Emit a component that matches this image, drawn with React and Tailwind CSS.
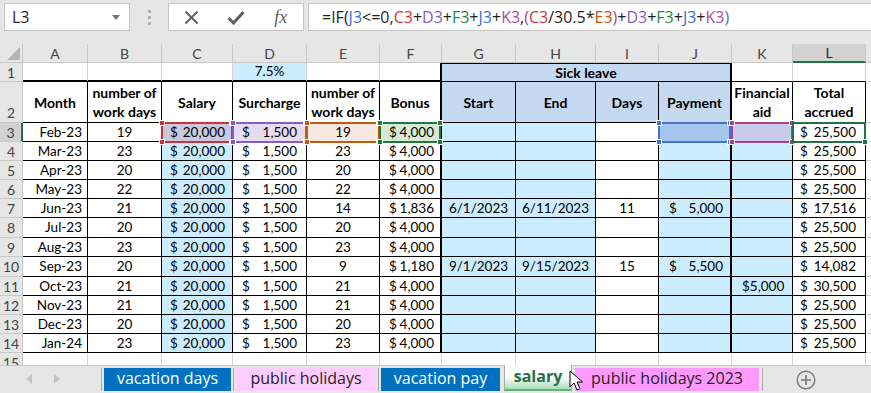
import React from "react";

const HEAD = "bg-[#e6e6e6]";
const GRID = "grid grid-cols-[23px_65px_74px_71px_74px_73px_62px_74px_80px_63px_73px_61px_73px_1fr]";
const CELLS = "grid grid-cols-[65px_74px_71px_74px_73px_62px_74px_80px_63px_73px_61px_73px]";

const rows = [
  { n: 3, m: "Feb-23", b: 19, e: 19, f: "4,000", l: "25,500" },
  { n: 4, m: "Mar-23", b: 23, e: 23, f: "4,000", l: "25,500" },
  { n: 5, m: "Apr-23", b: 20, e: 20, f: "4,000", l: "25,500" },
  { n: 6, m: "May-23", b: 22, e: 22, f: "4,000", l: "25,500" },
  { n: 7, m: "Jun-23", b: 21, e: 14, f: "1,836", g: "6/1/2023", h: "6/11/2023", i: 11, j: "5,000", l: "17,516" },
  { n: 8, m: "Jul-23", b: 20, e: 20, f: "4,000", l: "25,500", tall: true },
  { n: 9, m: "Aug-23", b: 23, e: 23, f: "4,000", l: "25,500" },
  { n: 10, m: "Sep-23", b: 20, e: 9, f: "1,180", g: "9/1/2023", h: "9/15/2023", i: 15, j: "5,500", l: "14,082", tall: true },
  { n: 11, m: "Oct-23", b: 21, e: 21, f: "4,000", k: "5,000", l: "30,500" },
  { n: 12, m: "Nov-23", b: 21, e: 21, f: "4,000", l: "25,500" },
  { n: 13, m: "Dec-23", b: 20, e: 20, f: "4,000", l: "25,500" },
  { n: 14, m: "Jan-24", b: 23, e: 23, f: "4,000", l: "25,500" },
];

const formula = [
  ["=IF(", "#1f1f1f"],
  ["J3", "#3b6fd0"],
  ["<=0,", "#1f1f1f"],
  ["C3", "#d0373c"],
  ["+", "#1f1f1f"],
  ["D3", "#8a5cc2"],
  ["+", "#1f1f1f"],
  ["F3", "#1d8a3c"],
  ["+", "#1f1f1f"],
  ["J3", "#3b6fd0"],
  ["+", "#1f1f1f"],
  ["K3", "#b34b9f"],
  [",", "#1f1f1f"],
  ["(", "#a0479e"],
  ["C3", "#d0373c"],
  ["/30.5*", "#1f1f1f"],
  ["E3", "#c55a11"],
  [")", "#a0479e"],
  ["+", "#1f1f1f"],
  ["D3", "#8a5cc2"],
  ["+", "#1f1f1f"],
  ["F3", "#1d8a3c"],
  ["+", "#1f1f1f"],
  ["J3", "#3b6fd0"],
  ["+", "#1f1f1f"],
  ["K3", "#b34b9f"],
  [")", "#3b6fd0"],
];

// colored reference box drawn over a cell in edit mode
function RefBox({ color }) {
  const sq = "absolute w-[6px] h-[6px] border border-white";
  return (
    <div className="absolute -left-[1px] -top-[1px] -right-[1px] -bottom-[2px] z-10 pointer-events-none">
      <div className="absolute inset-0 border-2" style={{ borderColor: color }} />
      <div className={`${sq} -left-[2px] -top-[2px]`} style={{ background: color }} />
      <div className={`${sq} -right-[2px] -top-[2px]`} style={{ background: color }} />
      <div className={`${sq} -left-[2px] -bottom-[2px]`} style={{ background: color }} />
      <div className={`${sq} -right-[2px] -bottom-[2px]`} style={{ background: color }} />
    </div>
  );
}

function Money({ v }) {
  if (!v) return null;
  return (
    <div className="flex w-full justify-between">
      <span>$</span>
      <span>{v}</span>
    </div>
  );
}

function FormulaBar() {
  return (
    <div className="h-[44px] flex items-start pt-[3px] pl-[4px] shrink-0">
      <div className="w-[126px] h-[28px] bg-white border border-[#c6c6c6] flex items-center justify-between pl-[7px] pr-[9px]">
        <span className="text-[16px] text-[#262626]">L3</span>
        <svg width="8" height="5" viewBox="0 0 8 5"><path d="M0 0h8L4 5z" fill="#777" /></svg>
      </div>
      <div className="w-[38px] h-[28px] flex flex-col items-center justify-center gap-[3px]">
        <div className="w-[3px] h-[3px] bg-[#b0b0b0]" />
        <div className="w-[3px] h-[3px] bg-[#b0b0b0]" />
        <div className="w-[3px] h-[3px] bg-[#b0b0b0]" />
      </div>
      <div className="w-[136px] h-[28px] bg-white border border-[#c6c6c6] flex items-center">
        <div className="w-[45px] flex justify-center">
          <svg width="15" height="15" viewBox="0 0 15 15"><path d="M1.5 1.5l12 12M13.5 1.5l-12 12" stroke="#5f5f5f" strokeWidth="2" /></svg>
        </div>
        <div className="w-[45px] flex justify-center">
          <svg width="18" height="15" viewBox="0 0 18 15"><path d="M1.5 8l5 5L16.5 2" fill="none" stroke="#5f5f5f" strokeWidth="3" /></svg>
        </div>
        <div className="w-[45px] flex justify-center">
          <span className="italic text-[18px] text-[#5f5f5f] font-['Liberation_Serif',serif]">fx</span>
        </div>
      </div>
      <div className="ml-[4px] flex-1 h-[28px] bg-white border border-r-0 border-[#c6c6c6] flex items-center pl-[13px] text-[16px]">
        {formula.map(([t, c], i) => (
          <span key={i} style={{ color: c }}>{t}</span>
        ))}
      </div>
    </div>
  );
}

function ColHeaders() {
  const letters = ["A", "B", "C", "D", "E", "F", "G", "H", "I", "J", "K", "L"];
  return (
    <div className={`${GRID} h-[19px] ${HEAD} text-[14px] text-[#444]`}>
      <div className="relative border-r border-b border-[#c8c8c8]">
        <svg className="absolute right-[2px] bottom-[2px]" width="13" height="13" viewBox="0 0 13 13"><path d="M13 0v13H0z" fill="#b4b4b4" /></svg>
      </div>
      {letters.map((l) =>
        l === "L" ? (
          <div key={l} className="bg-[#d2d2d2] border-r border-[#c8c8c8] border-b-2 border-b-[#217346] flex items-center justify-center text-[#262626]">{l}</div>
        ) : (
          <div key={l} className="border-r border-b border-[#c8c8c8] flex items-center justify-center">{l}</div>
        )
      )}
      <div className="border-b border-[#c8c8c8]" />
    </div>
  );
}

function RowHead({ n, sel, bottom }) {
  if (sel) {
    return <div className="w-[23px] shrink-0 bg-[#d2d2d2] border-r-2 border-[#217346] border-b border-b-[#c8c8c8] flex items-center justify-center text-[14px] text-[#444]">{n}</div>;
  }
  return (
    <div className={`w-[23px] shrink-0 ${HEAD} border-r border-b border-[#c8c8c8] flex ${bottom ? "items-end pb-[1px]" : "items-center"} justify-center text-[14px] text-[#444]`}>{n}</div>
  );
}

function Row1() {
  const c = "border-r border-r-[#d4d4d4] border-b-2 border-b-black";
  return (
    <div className={`${GRID} h-[19px]`}>
      <RowHead n={1} />
      <div className={c} />
      <div className={c} />
      <div className={c} />
      <div className={`${c} bg-[#ccecff] flex items-center justify-center text-[13.5px]`}>7.5%</div>
      <div className={c} />
      <div className="border-r-2 border-r-black border-b-2 border-b-black" />
      <div className="col-span-4 bg-[#c5d9f1] border-t border-r-2 border-b border-black flex items-center justify-center font-bold">Sick leave</div>
      <div className="border-r border-r-[#d4d4d4] border-b border-b-black" />
      <div className="border-r border-r-[#d4d4d4] border-b border-b-black" />
      <div className="border-b border-[#d4d4d4]" />
    </div>
  );
}

function Row2() {
  const c = "border-r border-b border-black flex items-center justify-center text-center font-bold leading-[19px]";
  const s = `${c} bg-[#c5d9f1]`;
  return (
    <div className={`${GRID} h-[41px]`}>
      <RowHead n={2} bottom />
      <div className={c}>Month</div>
      <div className={c}>number of<br />work days</div>
      <div className={c}>Salary</div>
      <div className={c}>Surcharge</div>
      <div className={c}>number of<br />work days</div>
      <div className={`${c} border-r-2`}>Bonus</div>
      <div className={s}>Start</div>
      <div className={s}>End</div>
      <div className={s}>Days</div>
      <div className={`${s} border-r-2`}>Payment</div>
      <div className={c}>Financial<br />aid</div>
      <div className={c}>Total<br />accrued</div>
      <div className="border-b border-[#d4d4d4]" />
    </div>
  );
}

function DataRow({ r }) {
  const first = r.n === 3;
  const b = "relative border-r border-black flex items-center";
  const blue = "bg-[#ccecff]";
  return (
    <div className={`flex ${r.tall ? "h-[20px]" : "h-[19px]"} text-[13.5px]`}>
      <RowHead n={r.n} sel={first} />
      <div className={`${CELLS} grid-rows-[minmax(0,1fr)] border-b border-black`}>
        <div className={`${b} justify-end pr-[5px]`}>{r.m}</div>
        <div className={`${b} justify-center`}>{r.b}</div>
        <div className={`${b} pl-[8px] pr-[7px] ${first ? "bg-[#cac8dc]" : blue}`}>
          <Money v="20,000" />
          {first && <RefBox color="#c8323c" />}
        </div>
        <div className={`${b} pl-[9px] pr-[9px] ${first ? "bg-[#e5dcf0]" : ""}`}>
          <Money v="1,500" />
          {first && <RefBox color="#8a5cc2" />}
        </div>
        <div className={`${b} justify-center ${first ? "bg-[#f8e8e0]" : ""}`}>
          {r.e}
          {first && <RefBox color="#c55a11" />}
        </div>
        <div className={`${b} border-r-2 pl-[9px] pr-[6px] ${first ? "bg-[#d6e9d6]" : ""}`}>
          <Money v={r.f} />
          {first && <RefBox color="#1e7b3a" />}
        </div>
        <div className={`${b} ${blue} justify-center`}>{r.g}</div>
        <div className={`${b} ${blue} justify-center`}>{r.h}</div>
        <div className={`${b} justify-center`}>{r.i}</div>
        <div className={`${b} border-r-2 pl-[10px] pr-[7px] ${first ? "bg-[#a4c6ec]" : blue}`}>
          <Money v={r.j} />
          {first && <RefBox color="#4472c4" />}
        </div>
        <div className={`${b} pl-[10px] pr-[8px] ${first ? "bg-[#c9c9e8]" : blue}`}>
          <Money v={r.k} />
          {first && <RefBox color="#a8418f" />}
        </div>
        <div className={`${b} pl-[7px] pr-[9px]`}>
          <Money v={r.l} />
          {first && (
            <div className="absolute -left-[1px] -top-[1px] -right-[1px] -bottom-[2px] z-10 border-2 border-[#217346]">
              <div className="absolute -right-[4px] -bottom-[4px] w-[6px] h-[6px] bg-[#217346] border border-white" />
            </div>
          )}
        </div>
      </div>
      <div className="flex-1 border-b border-[#d4d4d4]" />
    </div>
  );
}

function Row15() {
  const c = "border-r border-[#d4d4d4]";
  return (
    <div className={`${GRID} h-[19px]`}>
      <RowHead n={15} />
      {Array.from({ length: 12 }).map((_, i) => (
        <div key={i} className={c} />
      ))}
      <div />
    </div>
  );
}

function Tabs() {
  const tab = "h-[23px] mt-[2px] flex items-center justify-center text-[16px] leading-none pb-[3px]";
  return (
    <div className="relative h-[28px] shrink-0 border-t border-[#c6c6c6] flex items-start font-['Open_Sans',sans-serif]">
      <div className="w-[101px] h-[25px] flex items-center">
        <svg className="ml-[26px]" width="6" height="10" viewBox="0 0 6 10"><path d="M6 0v10L0 5z" fill="#c4c4c4" /></svg>
        <svg className="ml-[22px]" width="6" height="10" viewBox="0 0 6 10"><path d="M0 0v10l6-5z" fill="#c4c4c4" /></svg>
      </div>
      <div className="w-[1px] h-[23px] mt-[2px] bg-[#a8a8a8]" />
      <div className={`${tab} ml-[2px] w-[127px] bg-[#0070c0] text-white`}>vacation days</div>
      <div className="w-[1px] h-[23px] mt-[2px] mx-[2px] bg-[#a8a8a8]" />
      <div className={`${tab} w-[140px] bg-[#ffccff] text-[#1f1f1f]`}>public holidays</div>
      <div className="w-[1px] h-[23px] mt-[2px] mx-[2px] bg-[#a8a8a8]" />
      <div className={`${tab} w-[119px] bg-[#0070c0] text-white`}>vacation pay</div>
      <div className="ml-[4px] w-[68px] h-[26px] -mt-[1px] bg-gradient-to-b from-white via-white to-[#a9dbb8] border-x border-[#a8a8a8] border-b-2 border-b-[#5fb47a] flex items-center justify-center font-bold text-[16px] text-[#217346] pb-[2px]">salary</div>
      <div className={`${tab} ml-[3px] w-[184px] bg-[#ff99ff] text-[#1f1f1f]`}>public holidays 2023</div>
      <div className="w-[1px] h-[23px] mt-[2px] ml-[3px] bg-[#a8a8a8]" />
      <div className="ml-[33px] mt-[4px]">
        <svg width="20" height="20" viewBox="0 0 20 20">
          <circle cx="10" cy="10" r="8.8" fill="none" stroke="#777" strokeWidth="1.4" />
          <path d="M10 5v10M5 10h10" stroke="#777" strokeWidth="1.6" />
        </svg>
      </div>
      <svg className="absolute left-[569px] top-[4px]" width="14" height="22" viewBox="0 0 14 22">
        <path d="M1 1v16l4-4 3 7 3-1.3-3-6.7h5.5z" fill="white" stroke="black" strokeWidth="1" />
      </svg>
    </div>
  );
}

export default function App() {
  return (
    <div className="w-[871px] h-[393px] overflow-hidden bg-[#e6e6e6] flex flex-col font-['Segoe_UI','Open_Sans',sans-serif] text-[#1f1f1f]">
      <FormulaBar />
      <div className="flex-1 overflow-hidden bg-white font-['Lato',sans-serif] text-[14px] leading-[17px] text-black">
        <ColHeaders />
        <Row1 />
        <Row2 />
        {rows.map((r) => (
          <DataRow key={r.n} r={r} />
        ))}
        <Row15 />
      </div>
      <Tabs />
    </div>
  );
}
